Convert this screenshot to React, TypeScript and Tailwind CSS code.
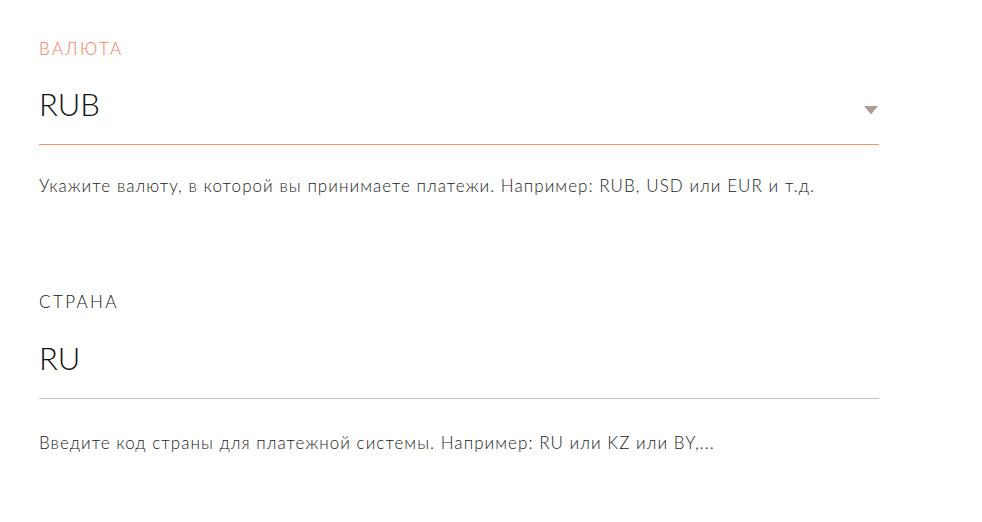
export default function App() {
  return (
    <div className="min-h-[522px] w-[982px] bg-white" style={{ fontFamily: 'Lato, "Noto Sans", sans-serif' }}>
      <div className="w-[879px] pl-[39px] pt-[39px]">
        <div>
          <div className="h-[20px] text-[17px] leading-[20px] font-light tracking-[2.4px] text-[#f47a5c]">ВАЛЮТА</div>
          <div className="flex items-center justify-between border-b border-[#f5946f] pt-[25px] pb-[20px]">
            <span className="h-[40px] text-[31px] leading-[40px] font-light text-[#111]">RUB</span>
            <svg width="14" height="9" viewBox="0 0 14 9" className="mr-[1px] mt-[12px]">
              <polygon points="0,0 14,0 7,8.5" fill="#b39a95" />
            </svg>
          </div>
          <div className="mt-[29px] h-[24px] text-[17px] leading-[24px] font-light tracking-[1.05px] text-[#222]">
            Укажите валюту, в которой вы принимаете платежи. Например: RUB, USD или EUR и т.д.
          </div>
        </div>
        <div className="mt-[94px]">
          <div className="h-[20px] text-[17px] leading-[20px] font-light tracking-[2.4px] text-[#111]">СТРАНА</div>
          <div className="flex items-center border-b border-[#c4c4c4] pt-[26px] pb-[20px]">
            <span className="h-[40px] text-[31px] leading-[40px] font-light text-[#111]">RU</span>
          </div>
          <div className="mt-[32px] h-[24px] text-[17px] leading-[24px] font-light tracking-[1.05px] text-[#222]">
            Введите код страны для платежной системы. Например: RU или KZ или BY,...
          </div>
        </div>
      </div>
    </div>
  );
}
